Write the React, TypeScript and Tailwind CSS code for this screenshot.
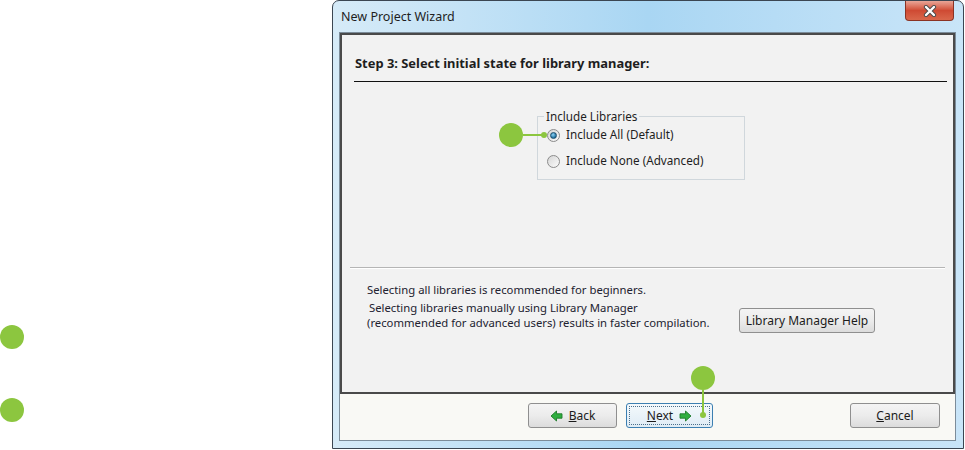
import React from 'react';

const font = { fontFamily: '"Noto Sans", "Open Sans", sans-serif' };

function Radio({ checked }: { checked?: boolean }) {
  return (
    <span className="w-[13px] h-[13px] rounded-full border border-[#8b8b8b] bg-gradient-to-br from-[#d6d6d6] to-[#fbfbfb] flex items-center justify-center shrink-0">
      {checked && (
        <span className="w-[7px] h-[7px] rounded-full bg-[radial-gradient(circle_at_40%_35%,#8fd3f5,#1f6f9e_70%)] border border-[#1b4f6e]" />
      )}
    </span>
  );
}

function Arrow({ dir }: { dir: 'left' | 'right' }) {
  return (
    <svg width="13" height="12" viewBox="0 0 13 12" className={dir === 'left' ? '' : 'rotate-180'}>
      <path d="M1 6 L6.5 1 L6.5 3.8 L12 3.8 L12 8.2 L6.5 8.2 L6.5 11 Z" fill="#2fae3f" stroke="#1f7a2a" strokeWidth="0.9" strokeLinejoin="round" />
    </svg>
  );
}

function WinButton({ children, className = '', focused = false }: { children: React.ReactNode; className?: string; focused?: boolean }) {
  return (
    <div
      className={
        'h-[25px] rounded-[3px] border flex items-center justify-center text-[12px] text-[#1b1b1b] ' +
        (focused
          ? 'border-[#3c7fb1] bg-gradient-to-b from-[#f4f9fc] to-[#dfecf5] p-[2px] '
          : 'border-[#8f8f8f] bg-gradient-to-b from-[#f4f4f4] via-[#ececec] to-[#dcdcdc] ') +
        className
      }
    >
      {focused ? (
        <div className="w-full h-full border border-dotted border-[#4a6f8c] flex items-center justify-center gap-[6px]">{children}</div>
      ) : (
        children
      )}
    </div>
  );
}

export default function App() {
  return (
    <div className="relative w-[965px] h-[450px] bg-white flex overflow-hidden" style={font}>
      {/* left annotation markers */}
      <div className="w-[332px] shrink-0 flex flex-col pt-[325px] gap-[49px]">
        <span className="w-[24px] h-[24px] rounded-full bg-[#8cc63f]" />
        <span className="w-[24px] h-[24px] rounded-full bg-[#8cc63f]" />
      </div>

      {/* window */}
      <div className="w-[632px] h-[449px] shrink-0 border border-[#3b4652] rounded-t-[7px] bg-gradient-to-r from-[#d6ebf8] via-[#a9d6f3] to-[#c9e5f8] flex flex-col pl-[6px] pr-[7px] pb-[7px]">
        <div className="h-[31px] flex items-start justify-between">
          <span className="pl-[2px] mt-[8px] text-[12.5px] leading-[16px] text-[#1e1e1e]">New Project Wizard</span>
          <div className="mr-[2px] w-[49px] h-[20px] rounded-b-[4px] border border-t-0 border-[#8a3324] bg-gradient-to-b from-[#e8a597] via-[#cf4a33] to-[#d9674b] flex items-center justify-center">
            <svg width="14" height="12" viewBox="0 0 14 12">
              <path d="M3 2 L11 10 M11 2 L3 10" stroke="#4a4a4a" strokeWidth="4.2" strokeLinecap="round" />
              <path d="M3 2 L11 10 M11 2 L3 10" stroke="#ffffff" strokeWidth="2.4" strokeLinecap="round" />
            </svg>
          </div>
        </div>

        <div className="flex-1 flex flex-col border border-[#7c8c99]">
          {/* main panel */}
          <div className="h-[361px] shrink-0 bg-[#f2f2f2] border-2 border-[#4a4a4a] flex flex-col text-[#1e1e1e]">
            <div className="pt-[21px] pl-[13px] text-[12.9px] leading-[14px] font-bold">Step 3: Select initial state for library manager:</div>
            <div className="mt-[11px] ml-[12px] mr-[6px] h-px bg-[#111]" />

            <fieldset className="mt-[27px] ml-[195px] w-[208px] border border-[#d0d7dc] pl-[6px] pb-[10px]">
              <legend className="px-[2px] text-[11.7px] leading-[15px]">Include Libraries</legend>
              <div className="mt-[3px] ml-[3px] flex items-center gap-[6px] h-[16px] text-[11.7px]">
                <Radio checked />
                <span>Include All (Default)</span>
              </div>
              <div className="mt-[10px] ml-[3px] flex items-center gap-[6px] h-[16px] text-[11.7px]">
                <Radio />
                <span>Include None (Advanced)</span>
              </div>
            </fieldset>

            <div className="mt-[87px] mx-[8px] h-px bg-[#b5b5b5] border-b border-white box-content" />

            <div className="mt-[13px] pl-[25px] text-[11.3px] leading-[16px] text-[#222230]">Selecting all libraries is recommended for beginners.</div>
            <div className="flex items-start pl-[25px] mt-[2px]">
              <div className="w-[372px] text-[11.3px] leading-[15px] text-[#222230]">
                <div className="pl-[2px]">Selecting libraries manually using Library Manager</div>
                <div>(recommended for advanced users) results in faster compilation.</div>
              </div>
              <WinButton className="mt-[8px] w-[136px]">Library Manager Help</WinButton>
            </div>
          </div>

          {/* footer */}
          <div className="flex-1 bg-[#f9f9f5] flex items-start pt-[9px]">
            <WinButton className="ml-[188px] w-[89px] gap-[6px]">
              <Arrow dir="left" />
              <span>
                <span className="underline">B</span>ack
              </span>
            </WinButton>
            <WinButton focused className="ml-[9px] w-[87px]">
              <span>
                <span className="underline">N</span>ext
              </span>
              <Arrow dir="right" />
            </WinButton>
            <WinButton className="ml-auto mr-[15px] w-[90px]">
              <span>
                <span className="underline">C</span>ancel
              </span>
            </WinButton>
          </div>
        </div>
      </div>

      {/* callouts over the window */}
      <div className="absolute left-[499px] top-[123px] flex items-center">
        <span className="w-[24px] h-[24px] rounded-full bg-[#8cc63f]" />
        <span className="w-[20px] h-[2px] bg-[#8cc63f]" />
        <span className="w-[6px] h-[6px] -ml-[2px] rounded-full bg-[#8cc63f]" />
      </div>
      <div className="absolute left-[691px] top-[366px] flex flex-col items-center">
        <span className="w-[24px] h-[24px] rounded-full bg-[#8cc63f]" />
        <span className="w-[2px] h-[24px] bg-[#8cc63f]" />
        <span className="w-[6px] h-[6px] -mt-[2px] rounded-full bg-[#8cc63f]" />
      </div>
    </div>
  );
}
